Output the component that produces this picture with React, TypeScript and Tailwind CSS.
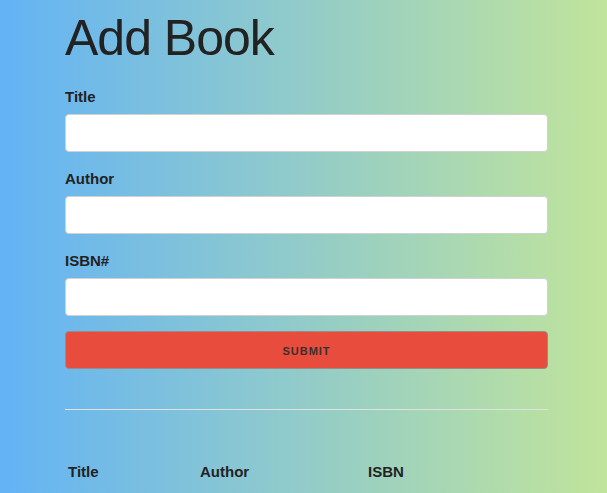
import { useState } from 'react';

const fields = [
  { key: 'title', label: 'Title' },
  { key: 'author', label: 'Author' },
  { key: 'isbn', label: 'ISBN#' },
];

function App() {
  const [values, setValues] = useState<Record<string, string>>({ title: '', author: '', isbn: '' });

  return (
    <div className="min-h-screen bg-[linear-gradient(to_right,#63b3f6,#c1e49b)] font-['Liberation_Sans',Arial,sans-serif] text-[#222]">
      <div className="ml-[65px] w-[483px] pt-[8px]">
        <h1 className="mb-[17px] text-[50px] font-light leading-[60px] tracking-[-1px] text-[#222]">Add Book</h1>

        <form onSubmit={(e) => e.preventDefault()}>
          {fields.map((f) => (
            <div key={f.key}>
              <label className="mb-[5px] block text-[15px] font-bold leading-[24px] text-[#222]">{f.label}</label>
              <input
                type="text"
                value={values[f.key]}
                onChange={(e) => setValues({ ...values, [f.key]: e.target.value })}
                className="mb-[15px] block h-[38px] w-full rounded-[4px] border border-[#d1d1d1] bg-white px-[10px] py-[6px] text-[15px] outline-none"
              />
            </div>
          ))}
          <button
            type="submit"
            className="block h-[38px] w-full rounded-[4px] border border-[#9a8a88] bg-[#e74c3c] text-[11px] font-bold uppercase leading-[38px] tracking-[1px] text-[#3a3030]"
          >
            Submit
          </button>
        </form>

        <hr className="mt-[40px] mb-[35px] border-0 border-t border-[#e1e1e1]" />

        <table className="border-separate border-spacing-[2px]">
          <thead>
            <tr>
              <th className="w-[130px] p-px text-left text-[15px] font-bold leading-[24px] pt-[13px]">Title</th>
              <th className="w-[166px] p-px text-left text-[15px] font-bold leading-[24px] pt-[13px]">Author</th>
              <th className="w-[120px] p-px text-left text-[15px] font-bold leading-[24px] pt-[13px]">ISBN</th>
            </tr>
          </thead>
          <tbody></tbody>
        </table>
      </div>
    </div>
  );
}

export default App;
